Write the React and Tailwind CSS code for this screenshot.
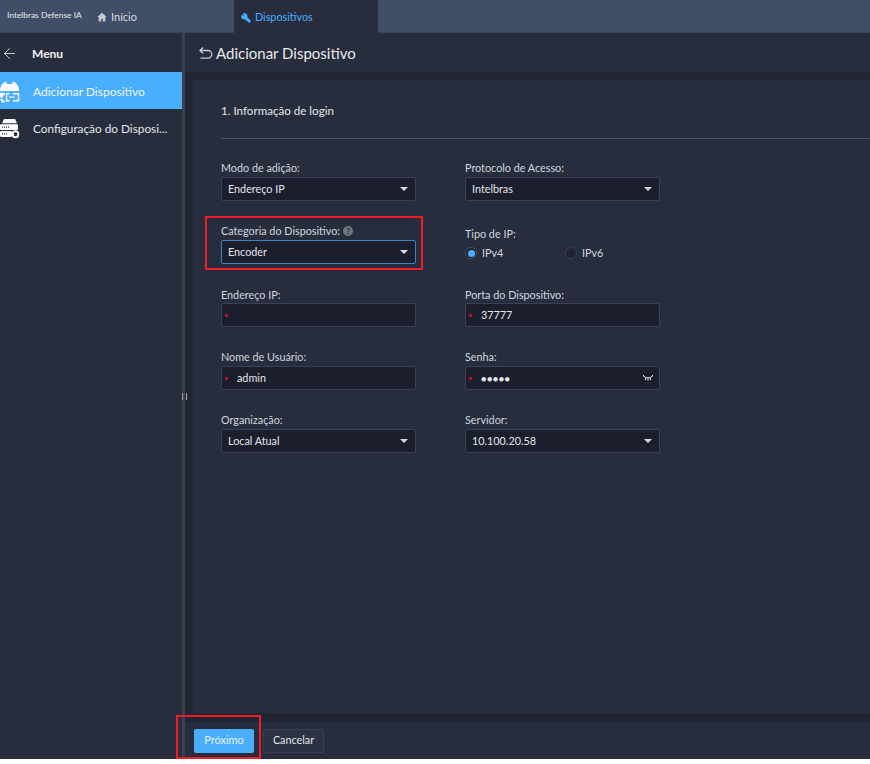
import { Wrench, ArrowLeft } from 'lucide-react';

function Label({ children }) {
  return <div className="h-[18px] text-[10.8px] leading-[18px] text-[#d3d6dd] whitespace-nowrap">{children}</div>;
}

function Select({ value, focus }) {
  return (
    <div className={`mb-[1px] h-[24px] w-[195px] flex items-center justify-between pl-[6px] pr-[7px] rounded-[2px] border bg-[#1b1e2d] text-[10.8px] text-[#e4e6ea] ${focus ? 'border-[#3f84bb]' : 'border-[#3b4152]'}`}>
      <span className="pt-[1px]">{value}</span>
      <span className="w-0 h-0 border-l-[4px] border-r-[4px] border-t-[4px] border-l-transparent border-r-transparent border-t-[#d8dade]" />
    </div>
  );
}

function Input({ value, dots, eye }) {
  return (
    <div className="mb-[1px] h-[24px] w-[195px] flex items-center pl-[3px] pr-[5px] rounded-[2px] border border-[#3b4152] bg-[#1b1e2d] text-[10.8px] text-[#e4e6ea]">
      <span className="w-[3px] h-[3px] rounded-full bg-[#e0101c]" />
      <span className={`ml-[9px] pt-[1px] ${dots ? 'text-[9px] tracking-[0.5px]' : ''}`}>{value}</span>
      {eye && (
        <svg className="ml-auto" width="12" height="8" viewBox="0 0 12 8" fill="none" stroke="#e4e6ea" strokeWidth="1">
          <path d="M1 1.5c2.500 3 7.500 3 10 0M1 1l1.500 1.500M11 1L9.500 2.500M4 3.500L3.500 6M8 3.500L8.500 6M6 4v2.500" />
        </svg>
      )}
    </div>
  );
}

function Radio({ label, checked }) {
  return (
    <div className="w-[100px] shrink-0 flex items-center gap-[5px] text-[10.8px] text-[#d3d6dd]">
      <span className={`w-[12px] h-[12px] rounded-full border bg-[#1f2331] flex items-center justify-center ${checked ? 'border-[#4a5266]' : 'border-[#3b4152]'}`}>
        {checked && <span className="w-[7px] h-[7px] rounded-full bg-[#4aaeff]" />}
      </span>
      {label}
    </div>
  );
}

function AddIcon() {
  return (
    <svg width="20" height="23" viewBox="0 0 20 20" preserveAspectRatio="none" fill="white" className="shrink-0">
      <path d="M0 9.500a9.500 9 0 0 1 6.500-8.500v2.500h6V1A9.500 9 0 0 1 19 9.500z" />
      <path d="M0 11h5v2H3.500l-1 2.500H0z" />
      <path d="M0 16.500h2.500l3 3H2z" />
      <g fill="none" stroke="white" strokeWidth="1.400">
        <path d="M9.500 12h-3v6h3M13 12h5.500v6H13M9.500 15h5" />
      </g>
    </svg>
  );
}

function ConfigIcon() {
  return (
    <svg width="20" height="20" viewBox="0 0 20 19" preserveAspectRatio="none" className="shrink-0">
      <path d="M4 0h11l2 4H2z" fill="white" />
      <rect x="0" y="5" width="18" height="5.500" rx="1" fill="white" />
      <rect x="0" y="11.500" width="12" height="5.500" rx="1" fill="white" />
      <path d="M2 7.700h8M2 14.200h6" stroke="#252a39" strokeWidth="1.200" strokeDasharray="1 1" />
      <circle cx="15.500" cy="14.500" r="2.800" fill="#252a39" stroke="white" strokeWidth="2" />
    </svg>
  );
}

export default function App() {
  return (
    <div className="font-[Lato,sans-serif] w-[870px] h-[764px] flex flex-col bg-white overflow-hidden">
      {/* top tabs */}
      <div className="h-[33px] shrink-0 flex bg-[#414e68] border-b border-[#3a4459]">
        <div className="w-[97px] pl-[7px] pt-[9px] text-[8.4px] leading-[12px] text-[#e8eaee] whitespace-nowrap">Intelbras Defense IA</div>
        <div className="w-[137px] flex items-center gap-[4px] pt-[2px] text-[11px] text-[#d8dce3]">
          <svg width="10" height="10" viewBox="0 0 12 12" fill="#c8ccd4" className="shrink-0">
            <path d="M6 1L.5 6H2v5.500h3V8h2v3.500h3V6h1.500z" />
          </svg>
          Início
        </div>
        <div className="w-[144px] h-[33px] flex items-center gap-[4px] pl-[7px] pt-[2px] bg-[#272d3d] text-[10.8px] text-[#4aaeff]">
          <Wrench size={10} fill="#4aaeff" strokeWidth={3} className="-scale-x-100" />
          Dispositivos
        </div>
      </div>

      <div className="flex-1 flex min-h-0 bg-[#272d3d]">
        {/* menu */}
        <div className="w-[182px] shrink-0 flex flex-col">
          <div className="h-[39px] flex items-center pl-[1px] pt-[2px] text-[12px] font-bold text-[#f0f1f4]">
            <ArrowLeft size={17} strokeWidth={1.300} className="text-[#d8dade]" />
            <span className="ml-[14px]">Menu</span>
          </div>
          <div className="h-[37px] flex items-center gap-[13px] pt-[1px] bg-[#4aaeff] text-[12px] text-[#f2f6fb]">
            <AddIcon />
            <span className="pt-[1px]">Adicionar Dispositivo</span>
          </div>
          <div className="h-[37px] flex items-center gap-[13px] pt-[2px] text-[11.8px] text-[#e4e6ea]">
            <ConfigIcon />
            <span className="whitespace-nowrap">Configuração do Disposi...</span>
          </div>
        </div>

        {/* splitter */}
        <div className="relative w-[3px] shrink-0 bg-[#3b4152]">
          <div className="absolute left-0 top-[360px] h-[7px] w-[5px] border-x border-[#a4a9b4]" />
        </div>

        <div className="flex-1 min-w-0 flex flex-col">
          <div className="h-[39px] shrink-0 flex items-center pl-[14px] pt-[1px] gap-[3px] text-[15px] text-[#e8eaee]">
            <svg width="14" height="14" viewBox="0 0 14 14" fill="none" stroke="#c8ccd4" strokeWidth="1.300" className="shrink-0">
              <path d="M1 4.500h8a3.800 3.800 0 0 1 0 7.600H1.500M4 1.500L1 4.500l3 3" />
            </svg>
            Adicionar Dispositivo
          </div>

          <div className="flex-1 min-h-0 flex flex-col bg-[#212632] pt-[8px]">
            <div className="flex-1 min-h-0 ml-[8px] bg-[#272d3d] pl-[28px]">
              <div className="h-[59px] pt-[3px] flex items-center border-b border-[#4a5061] text-[11.6px] text-[#e4e6ea]">
                1. Informação de login
              </div>

              <div className="mt-[20px] grid grid-cols-[244px_195px] gap-y-[20px]">
                <div>
                  <Label>Modo de adição:</Label>
                  <Select value="Endereço IP" />
                </div>
                <div>
                  <Label>Protocolo de Acesso:</Label>
                  <Select value="Intelbras" />
                </div>
                <div className="relative">
                  <div className="absolute left-[-16px] top-[-6px] w-[218px] h-[54px] border-2 border-[#f01c26]" />
                  <div className="flex h-[18px] items-center gap-[3px]">
                    <Label>Categoria do Dispositivo:</Label>
                    <span className="w-[10px] h-[10px] rounded-full bg-[#6d7482] text-[8px] leading-[10px] text-center font-bold text-[#272d3d]">?</span>
                  </div>
                  <Select value="Encoder" focus />
                </div>
                <div className="pt-[3px]">
                  <Label>Tipo de IP:</Label>
                  <div className="mt-[2px] flex">
                    <Radio label="IPv4" checked />
                    <Radio label="IPv6" />
                  </div>
                </div>
                <div>
                  <div className="pt-[1px] h-[18px]"><Label>Endereço IP:</Label></div>
                  <Input value="" />
                </div>
                <div>
                  <div className="pt-[1px] h-[18px]"><Label>Porta do Dispositivo:</Label></div>
                  <Input value="37777" />
                </div>
                <div>
                  <Label>Nome de Usuário:</Label>
                  <Input value="admin" />
                </div>
                <div>
                  <Label>Senha:</Label>
                  <Input value="●●●●●" dots eye />
                </div>
                <div>
                  <Label>Organização:</Label>
                  <Select value="Local Atual" />
                </div>
                <div>
                  <Label>Servidor:</Label>
                  <Select value="10.100.20.58" />
                </div>
              </div>
            </div>
            <div className="h-[9px] shrink-0" />
            <div className="relative h-[37px] shrink-0 flex items-center gap-[9px] pl-[9px] bg-[#272d3d]">
              <div className="absolute left-[-9px] top-[-7px] w-[85px] h-[44px] border-2 border-[#f01c26]" />
              <div className="relative w-[60px] h-[24px] flex items-center justify-center rounded-[2px] bg-[#4aaeff] text-[11px] text-[#e8f2fb]">Próximo</div>
              <div className="w-[61px] h-[24px] flex items-center justify-center rounded-[2px] border border-[#3b4152] bg-[#2c3242] text-[10.8px] text-[#e4e6ea]">Cancelar</div>
            </div>
          </div>
        </div>
      </div>
      <div className="h-[5px] shrink-0 bg-white" />
    </div>
  );
}
